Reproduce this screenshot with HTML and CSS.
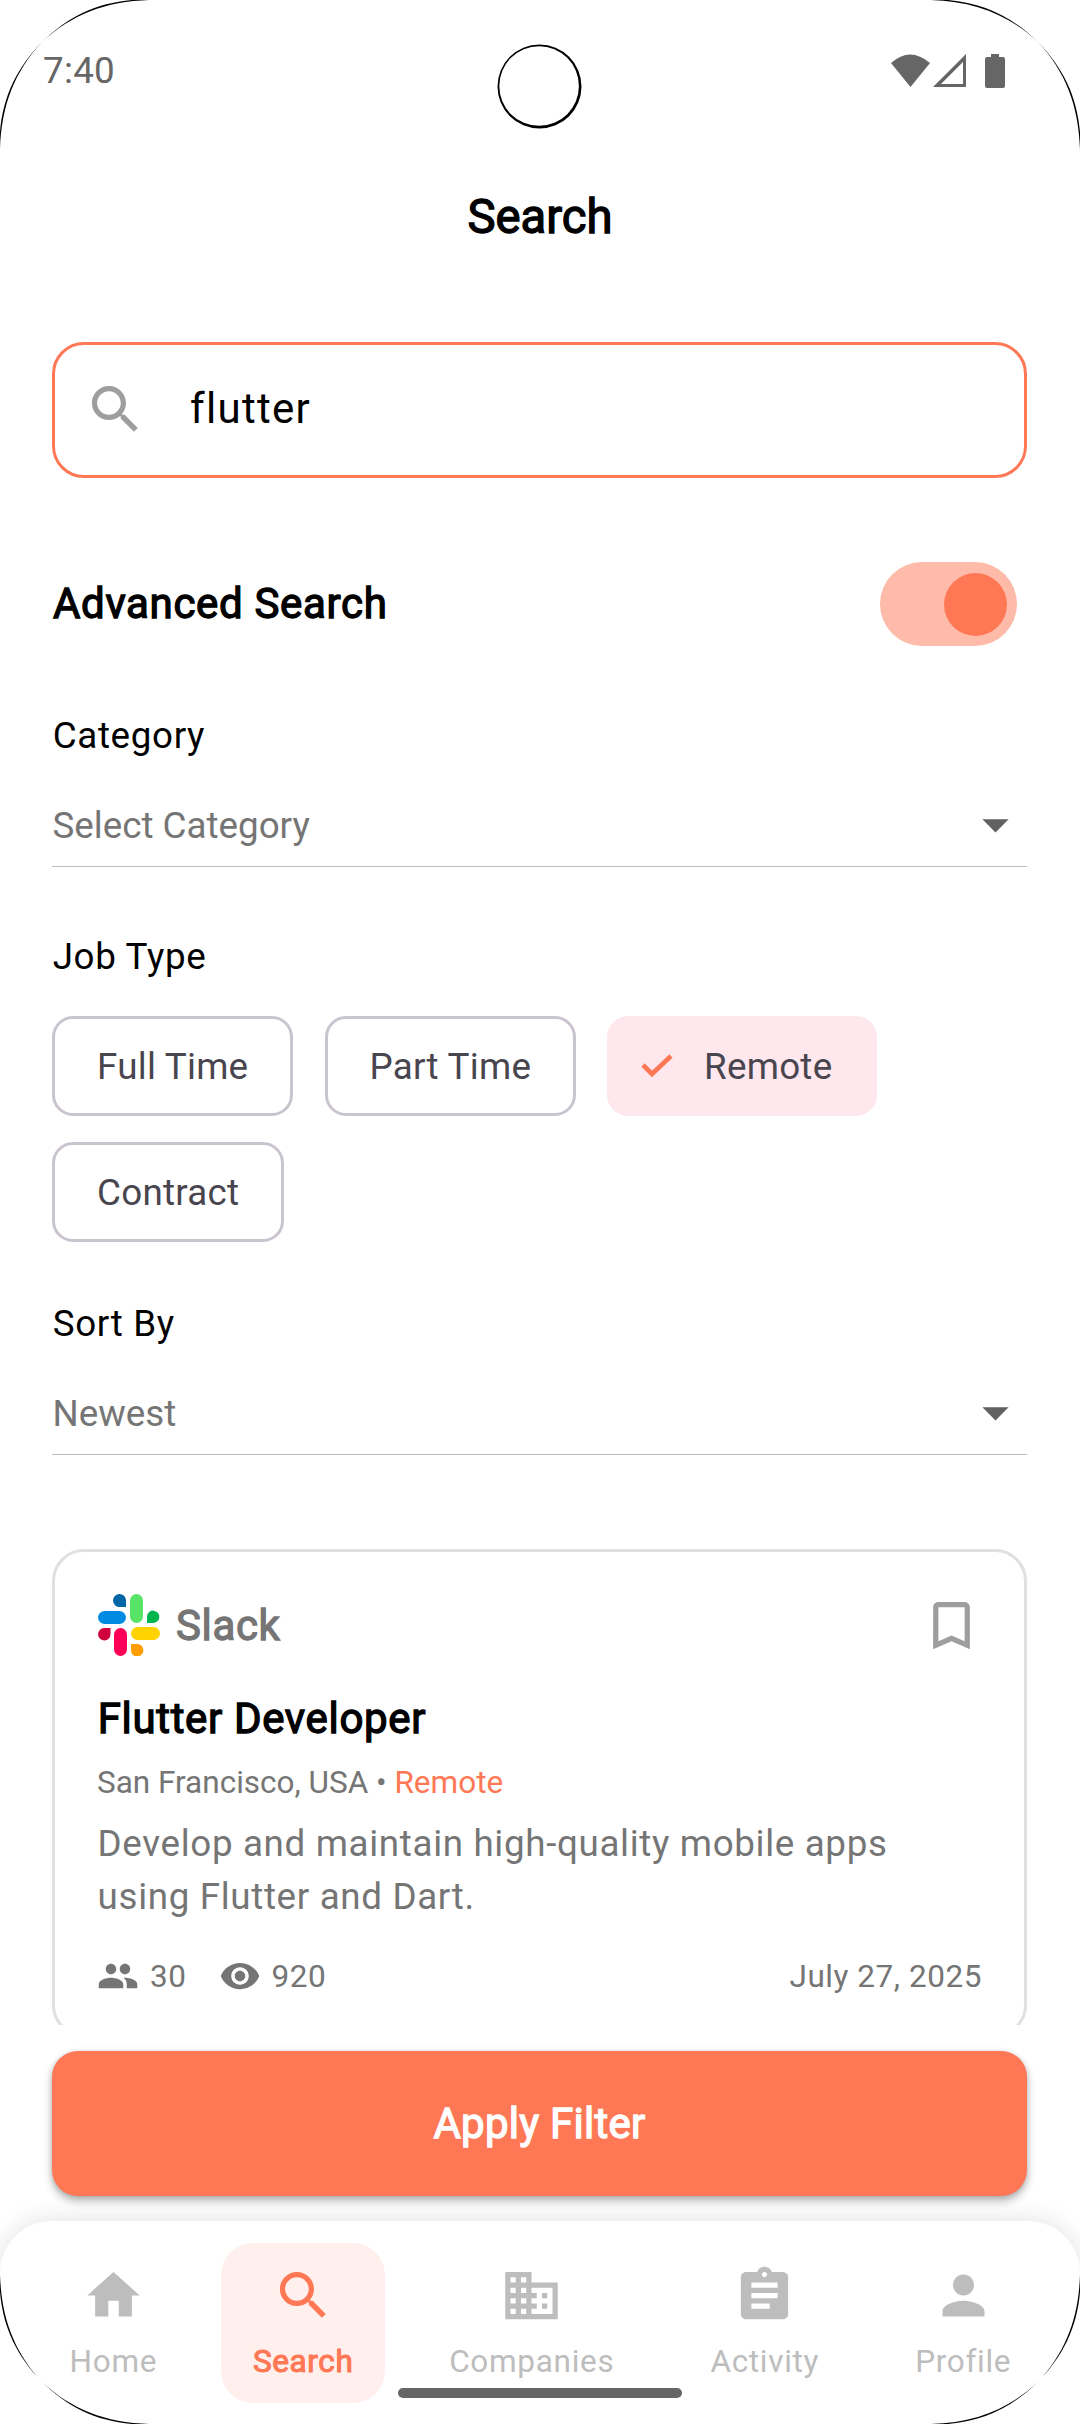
FILE: index.html
```html
<!DOCTYPE html>
<html lang="en">
<head>
<meta charset="utf-8">
<title>Search</title>
<link rel="stylesheet" href="styles.css">
</head>
<body>
<div class="screen">
  <header class="status">
    <span class="clock">7:40</span>
    <svg class="status-icons" viewBox="0 0 116 36" width="116" height="36">
      <path d="M1 11Q20 -6 40 11L20.500 35Z"/>
      <path d="M43 35L76 2V35ZM51 32H73V10Z" fill-rule="evenodd"/>
      <path d="M101 2H109V5H113Q115 5 115 7V34Q115 36 113 36H97Q95 36 95 34V7Q95 5 97 5H101Z"/>
    </svg>
  </header>
  <h1 class="title">Search</h1>
  <main class="content">
    <div class="search-box">
      <svg class="icon" viewBox="0 0 24 24"><path d="M15.500 14h-.79l-.28-.27C15.410 12.590 16 11.110 16 9.500 16 5.910 13.090 3 9.500 3S3 5.910 3 9.500 5.910 16 9.500 16c1.610 0 3.090-.59 4.230-1.570l.27.28v.79l5 4.990L20.490 19l-4.990-5zm-6 0C7.010 14 5 11.990 5 9.500S7.010 5 9.500 5 14 7.010 14 9.500 11.990 14 9.500 14z"/></svg>
      <span class="query">flutter</span>
    </div>
    <div class="advanced">
      <h2 class="heading">Advanced Search</h2>
      <div class="switch"><span class="thumb"></span></div>
    </div>
    <p class="label">Category</p>
    <div class="select">
      <span>Select Category</span>
      <svg class="icon" viewBox="0 0 24 24"><path d="M7 10l5 5 5-5z"/></svg>
    </div>
    <p class="label">Job Type</p>
    <div class="chips">
      <span class="chip">Full Time</span>
      <span class="chip chip-part">Part Time</span>
      <span class="chip chip-on"><svg class="check" viewBox="0 0 34 26" width="34" height="26"><path d="M3 12L12 21L31 3"/></svg>Remote</span>
      <span class="chip chip-contract">Contract</span>
    </div>
    <p class="label label-sort">Sort By</p>
    <div class="select">
      <span>Newest</span>
      <svg class="icon" viewBox="0 0 24 24"><path d="M7 10l5 5 5-5z"/></svg>
    </div>
    <div class="results">
      <article class="card">
        <div class="company">
          <svg class="logo" viewBox="0 0 62 62" width="62" height="62">
            <path fill="#0066a5" d="M28 13H22A6.500 6.500 0 1 1 28 6Z"/>
            <rect fill="#58e466" x="32" y="0" width="13" height="29" rx="6.500"/>
            <rect fill="#008ae2" x="0" y="17" width="28" height="13" rx="6.500"/>
            <path fill="#00b54e" d="M49 29V22A6.200 6.200 0 1 1 55 29Z"/>
            <path fill="#d0003f" d="M12.500 34V40A6.200 6.200 0 1 1 6 34Z"/>
            <rect fill="#ff0059" x="16" y="34" width="13" height="28" rx="6.500"/>
            <rect fill="#ffd300" x="33" y="33" width="29" height="13" rx="6.500"/>
            <path fill="#ff9e00" d="M33 50H39.500A6.200 6.200 0 1 1 33 56Z"/>
          </svg>
          <span class="company-name">Slack</span>
          <svg class="icon bookmark" viewBox="0 0 24 24"><path d="M17 3H7c-1.100 0-1.990.9-1.990 2L5 21l7-3 7 3V5c0-1.100-.9-2-2-2zm0 15l-5-2.180L7 18V5h10v13z"/></svg>
        </div>
        <h3 class="job">Flutter Developer</h3>
        <p class="place">San Francisco, USA • <span class="accent">Remote</span></p>
        <p class="desc">Develop and maintain high-quality mobile apps using Flutter and Dart.</p>
        <div class="meta">
          <svg class="icon-s" viewBox="0 0 24 24"><path d="M16 11c1.660 0 2.990-1.340 2.990-3S17.660 5 16 5c-1.660 0-3 1.340-3 3s1.340 3 3 3zm-8 0c1.660 0 2.990-1.340 2.990-3S9.660 5 8 5C6.340 5 5 6.340 5 8s1.340 3 3 3zm0 2c-2.330 0-7 1.170-7 3.500V19h14v-2.500c0-2.330-4.670-3.500-7-3.500zm8 0c-.29 0-.62.020-.97.050 1.160.84 1.970 1.970 1.970 3.450V19h6v-2.500c0-2.330-4.670-3.500-7-3.500z"/></svg>
          <span class="count">30</span>
          <svg class="icon-s" viewBox="0 0 24 24"><path d="M12 4.500C7 4.500 2.730 7.610 1 12c1.730 4.390 6 7.500 11 7.500s9.270-3.110 11-7.500c-1.730-4.390-6-7.500-11-7.500zM12 17c-2.760 0-5-2.240-5-5s2.240-5 5-5 5 2.240 5 5-2.240 5-5 5zm0-8c-1.660 0-3 1.340-3 3s1.340 3 3 3 3-1.340 3-3-1.340-3-3-3z"/></svg>
          <span class="count">920</span>
          <span class="date">July 27, 2025</span>
        </div>
      </article>
    </div>
    <button class="apply">Apply Filter</button>
  </main>
  <nav class="nav">
    <a class="tab"><svg class="icon" viewBox="0 0 24 24"><path d="M10 20v-6h4v6h5v-8h3L12 3 2 12h3v8z"/></svg><span>Home</span></a>
    <a class="tab tab-on"><svg class="icon" viewBox="0 0 24 24"><path d="M15.500 14h-.79l-.28-.27C15.410 12.590 16 11.110 16 9.500 16 5.910 13.090 3 9.500 3S3 5.910 3 9.500 5.910 16 9.500 16c1.610 0 3.090-.59 4.230-1.570l.27.28v.79l5 4.990L20.490 19l-4.990-5zm-6 0C7.010 14 5 11.990 5 9.500S7.010 5 9.500 5 14 7.010 14 9.500 11.990 14 9.500 14z"/></svg><span>Search</span></a>
    <a class="tab"><svg class="icon" viewBox="0 0 24 24"><path d="M12 7V3H2v18h20V7H12zM6 19H4v-2h2v2zm0-4H4v-2h2v2zm0-4H4V9h2v2zm0-4H4V5h2v2zm4 12H8v-2h2v2zm0-4H8v-2h2v2zm0-4H8V9h2v2zm0-4H8V5h2v2zm10 12h-8v-2h2v-2h-2v-2h2v-2h-2V9h8v10zm-2-8h-2v2h2v-2zm0 4h-2v2h2v-2z"/></svg><span>Companies</span></a>
    <a class="tab"><svg class="icon" viewBox="0 0 24 24"><path d="M19 3h-4.180C14.400 1.840 13.300 1 12 1c-1.300 0-2.400.84-2.820 2H5c-1.100 0-2 .9-2 2v14c0 1.100.9 2 2 2h14c1.100 0 2-.9 2-2V5c0-1.100-.9-2-2-2zm-7 0c.55 0 1 .45 1 1s-.45 1-1 1-1-.45-1-1 .45-1 1-1zm2 14H7v-2h7v2zm3-4H7v-2h10v2zm0-4H7V7h10v2z"/></svg><span>Activity</span></a>
    <a class="tab"><svg class="icon" viewBox="0 0 24 24"><path d="M12 12c2.210 0 4-1.790 4-4s-1.790-4-4-4-4 1.790-4 4 1.790 4 4 4zm0 2c-2.670 0-8 1.340-8 4v2h16v-2c0-2.660-5.330-4-8-4z"/></svg><span>Profile</span></a>
  </nav>
  <div class="gesture"></div>
  <svg class="bezel" viewBox="0 0 1080 2424" width="1080" height="2424">
    <defs>
      <path id="corner" d="M0 165C-4 112 10 75 42 42C11.500 75 -1.500 113 0 165ZM165 0C112 -4 75 10 42 42C75 11.500 113 -1.500 165 0Z"/>
    </defs>
    <use href="#corner"/>
    <use href="#corner" transform="translate(1080 0) scale(-1 1)"/>
    <use href="#corner" transform="translate(0 2424) scale(1 -1)"/>
    <use href="#corner" transform="translate(1080 2424) scale(-1 -1)"/>
    <path fill-rule="evenodd" d="M497.500 86.500a42 42 0 1 0 84 0a42 42 0 1 0 -84 0ZM499.300 86a39.800 39.800 0 1 0 79.600 0a39.800 39.800 0 1 0 -79.600 0Z"/>
  </svg>
</div>
</body>
</html>
```
FILE: styles.css
```css
* { box-sizing: border-box; }
body { margin: 0; background: #fff; font-family: Roboto, sans-serif; color: #000; }
h1, h2, h3, p { margin: 0; font-weight: 400; }
.screen { position: relative; width: 1080px; height: 2424px; overflow: hidden; background: #fff; display: flex; flex-direction: column; }
.icon { width: 63px; height: 63px; flex: none; fill: currentColor; }
.icon-s { width: 42px; height: 42px; flex: none; fill: currentColor; }

.title, .heading, .company-name, .job, .apply { -webkit-text-stroke: 1.3px currentColor; }

.status { height: 136px; padding: 49px 74px 0 43px; display: flex; justify-content: space-between; align-items: flex-start; color: #666; }
.clock { font-size: 36.75px; line-height: 44px; letter-spacing: .3px; }
.status-icons { fill: #666; margin-top: 3px; }
.title { height: 160px; line-height: 162px; text-align: center; font-size: 47.25px; }

.content { height: 1925px; padding: 46px 53px 0 52px; display: flex; flex-direction: column; }
.search-box { height: 136px; flex: none; border: 3px solid #fe7856; border-radius: 32px; display: flex; align-items: center; padding: 0 0 1px 29px; color: #9e9e9e; }
.query { margin: 0 0 2px 43px; font-size: 42px; letter-spacing: 1.31px; color: #000; }
.advanced { height: 84px; flex: none; margin-top: 84px; display: flex; align-items: center; justify-content: space-between; padding-right: 10px; }
.heading { margin-bottom: 2px; font-size: 42px; letter-spacing: .66px; text-indent: 1px; }
.switch { width: 137px; height: 84px; border-radius: 42px; background: #febba9; display: flex; align-items: center; justify-content: flex-end; padding-right: 10px; }
.thumb { width: 63px; height: 63px; border-radius: 50%; background: #fe7856; }
.label { flex: none; height: 52px; line-height: 52px; margin-top: 64px; font-size: 36.75px; letter-spacing: .66px; text-indent: .7px; }
.label-sort { margin-top: 56px; }
.select { flex: none; height: 83px; margin-top: 22px; border-bottom: 1px solid #bdbdbd; display: flex; align-items: center; justify-content: space-between; font-size: 36.75px; color: #757575; text-indent: .5px; }
.select .icon { color: #616161; margin-bottom: 1px; }
.chips { flex: none; display: flex; flex-wrap: wrap; gap: 26px 32px; margin-top: 33px; }
.chip { height: 100px; width: 241px; border: 3px solid #cac4d0; border-radius: 21px; display: flex; align-items: center; padding-left: 42px; font-size: 36.75px; letter-spacing: .26px; color: #49454f; }
.chip-part { width: 251px; padding-left: 41.5px; }
.chip-on { width: 270px; margin-left: -1px; background: #fee8ee; border-color: #fee8ee; padding-left: 30px; }
.chip-contract { width: 232px; }
.check { margin-right: 30px; fill: none; stroke: #fe7856; stroke-width: 4.6; }

.results { flex: none; height: 476px; margin-top: 94px; overflow: hidden; }
.card { height: 488px; border: 3px solid #e0e0e0; border-radius: 32px; padding: 41px 42px 0; color: #757575; }
.company { display: flex; align-items: center; height: 64px; }
.logo { margin-left: 1px; }
.company-name { margin-left: 16px; font-size: 42px; letter-spacing: .66px; }
.bookmark { margin: 0 -1px 0 auto; color: #9e9e9e; }
.job { margin-top: 32px; font-size: 42px; line-height: 60px; letter-spacing: .66px; text-indent: .7px; color: #000; }
.place { margin-top: 13px; font-size: 31.5px; line-height: 42px; }
.accent { color: #fe7856; }
.desc { margin-top: 14px; padding-left: .6px; font-size: 36.75px; line-height: 52.5px; letter-spacing: .66px; }
.meta { margin-top: 32px; height: 42px; display: flex; align-items: center; font-size: 31.5px; letter-spacing: .55px; }
.count { margin: 0 32px 0 11px; }
.date { margin-left: auto; }
.apply { flex: none; height: 145px; margin-top: 26px; border: 0; border-radius: 26px; background: #fe7856; color: #fff; font: 400 42px Roboto, sans-serif; letter-spacing: .26px; box-shadow: 0 5px 10px rgba(0,0,0,.28), 0 1px 5px rgba(0,0,0,.14); }

.nav { height: 203px; flex: none; background: #fff; border-radius: 52px 52px 0 0; box-shadow: 0 0 26px rgba(0,0,0,.12); display: flex; align-items: flex-start; gap: 32px; padding: 22px 0 0 37.6px; }
.tab { height: 160px; padding: 21px 32px 0; border-radius: 32px; display: flex; flex-direction: column; align-items: center; color: #bdbdbd; font-size: 31.5px; line-height: 42px; letter-spacing: .7px; }
.tab span { margin-top: 14px; }
.tab-on { width: 164px; background: #fff0ed; color: #fe7856; letter-spacing: .6px; }
.tab-on span { -webkit-text-stroke: 1.1px currentColor; }
.gesture { position: absolute; left: 398px; top: 2388px; width: 284px; height: 10px; border-radius: 5px; background: #666; }
.bezel { position: absolute; left: 0; top: 0; }
```
